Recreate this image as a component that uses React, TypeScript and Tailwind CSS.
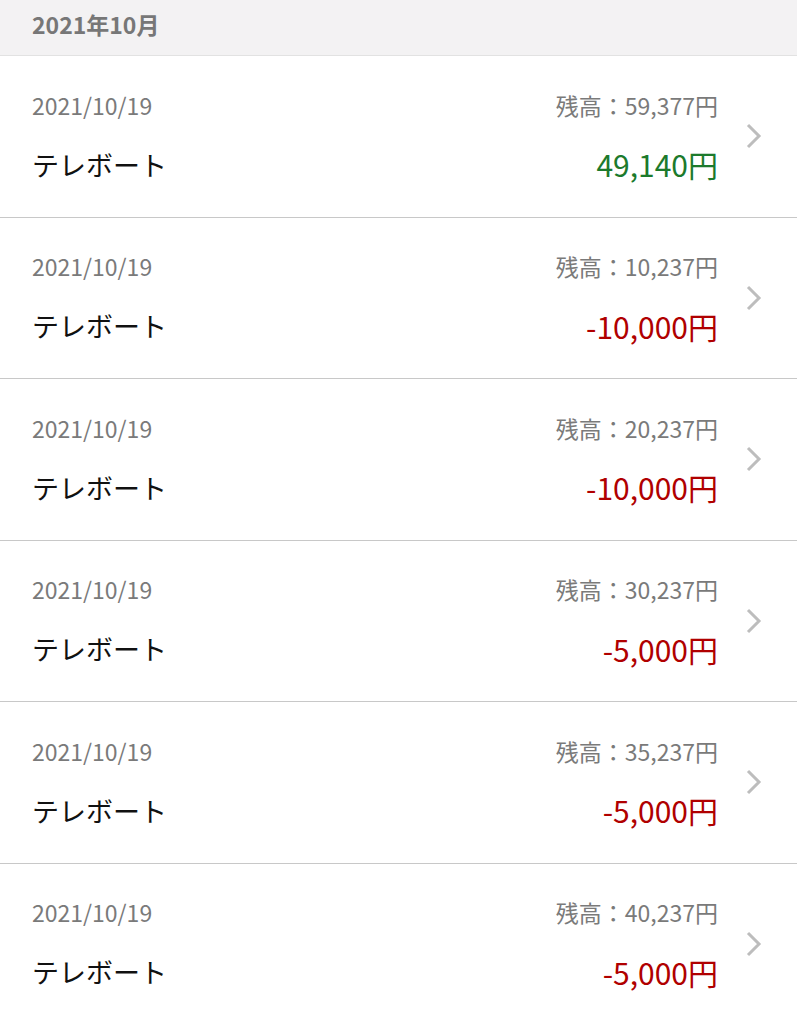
const rows = [
    { date: '2021/10/19', name: 'テレボート', balance: '59,377円', amount: '49,140円', income: true },
    { date: '2021/10/19', name: 'テレボート', balance: '10,237円', amount: '-10,000円', income: false },
    { date: '2021/10/19', name: 'テレボート', balance: '20,237円', amount: '-10,000円', income: false },
    { date: '2021/10/19', name: 'テレボート', balance: '30,237円', amount: '-5,000円', income: false },
    { date: '2021/10/19', name: 'テレボート', balance: '35,237円', amount: '-5,000円', income: false },
    { date: '2021/10/19', name: 'テレボート', balance: '40,237円', amount: '-5,000円', income: false },
]

function Chevron() {
    return (
        <svg width="20" height="28" viewBox="0 0 20 28" className="shrink-0">
            <path d="M4 3 L15 14 L4 25" fill="none" stroke="#bdbdbd" strokeWidth="3" />
        </svg>
    )
}

export default function App() {
    return (
        <div className="w-[797px] h-[1024px] overflow-hidden bg-white font-['Noto_Sans_CJK_JP',sans-serif]">
            {/* Month header */}
            <div className="h-[56px] bg-[#f3f2f3] border-b border-[#e2e2e2] px-8 pt-[13px]">
                <span className="text-[23px] font-bold text-[#777] leading-none">2021年10月</span>
            </div>

            {rows.map((r, i) => (
                <div key={i} className="h-[161.5px] border-b border-[#c8c8c8] pl-8 pr-[6px] flex items-center">
                    <div className="flex-1 flex flex-col">
                        <div className="flex justify-between items-center h-[30px] text-[23px] text-[#7a7a7a]">
                            <span>{r.date}</span>
                            <span>残高：{r.balance}</span>
                        </div>
                        <div className="flex justify-between items-center h-[36px] mt-[27px]">
                            <span className="text-[27px] text-[#111]">{r.name}</span>
                            <span className={`text-[30px] ${r.income ? 'text-[#1c7a2c]' : 'text-[#b00000]'}`}>{r.amount}</span>
                        </div>
                    </div>
                    <div className="w-[46px] flex justify-end pr-[27px] box-content">
                        <Chevron />
                    </div>
                </div>
            ))}
        </div>
    )
}
